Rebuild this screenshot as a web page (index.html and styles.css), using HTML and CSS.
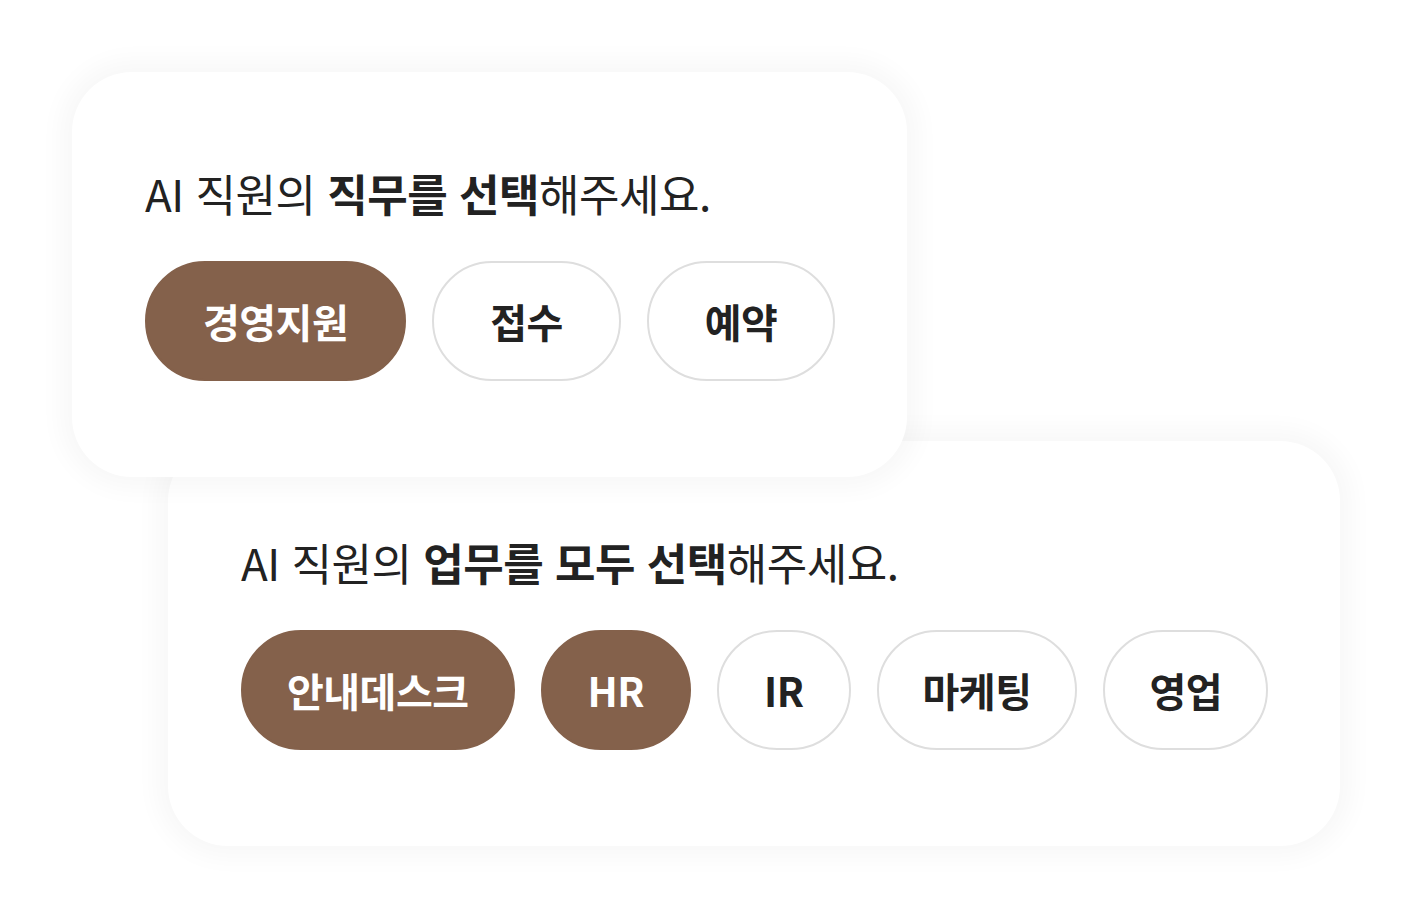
FILE: index.html
```html
<!DOCTYPE html>
<html lang="ko">
<head>
  <meta charset="UTF-8">
  <meta name="viewport" content="width=device-width, initial-scale=1.0">
  <title>AI 직원 설정</title>
  <link rel="stylesheet" href="styles.css">
</head>
<body>
  <div class="stack">
    <!-- Step 1: job type, single choice -->
    <section class="card card-job">
      <h2 class="question">AI 직원의 <b>직무를 선택</b>해주세요.</h2>
      <div class="chips">
        <button class="chip active">경영지원</button>
        <button class="chip">접수</button>
        <button class="chip">예약</button>
      </div>
    </section>

    <!-- Step 2: tasks, multiple choice -->
    <section class="card card-task">
      <h2 class="question">AI 직원의 <b>업무를 모두 선택</b>해주세요.</h2>
      <div class="chips">
        <button class="chip active">안내데스크</button>
        <button class="chip latin active">HR</button>
        <button class="chip latin">IR</button>
        <button class="chip">마케팅</button>
        <button class="chip">영업</button>
      </div>
    </section>
  </div>
</body>
</html>
```

FILE: styles.css
```css
/* Basic resets */
* {
  margin: 0;
  padding: 0;
  box-sizing: border-box;
}
body, html {
  height: 100%;
  background: #fff;
  font-family: "Noto Sans CJK KR", "Noto Sans", sans-serif;
  color: #222;
}
/* Cards overlap a little, the first one sits on top */
.stack {
  display: flex;
  flex-direction: column;
  align-items: flex-start;
  padding: 72px 0 0 72px;
}
.card {
  background: #fff;
  border-radius: 60px;
  padding: 93px 72px 96px 73px;
  box-shadow: 0 0 24px 12px rgba(0,0,0,0.03);
  position: relative;
}
.card-job {
  z-index: 2;
}
.card-task {
  z-index: 1;
  margin-top: -36px;
  margin-left: 96px;
}
.question {
  font-size: 44px;
  font-weight: 400;
  line-height: 56px;
  letter-spacing: -0.5px;
  margin-bottom: 40px;
}
.question b {
  font-weight: 700;
}
/* Pill buttons */
.chips {
  display: flex;
  gap: 26px;
}
.chip {
  height: 120px;
  padding: 0 56px;
  border: 2px solid #dedede;
  border-radius: 60px;
  background: #fff;
  color: #222;
  font-family: inherit;
  font-size: 40px;
  font-weight: 700;
  letter-spacing: -0.5px;
  cursor: pointer;
}
.card-task .chip {
  padding: 0 44px;
}
.card-task .chip.latin {
  padding: 0 45px;
}
.chip.active {
  background: #84614b;
  border-color: #84614b;
  color: #fff;
}
```
